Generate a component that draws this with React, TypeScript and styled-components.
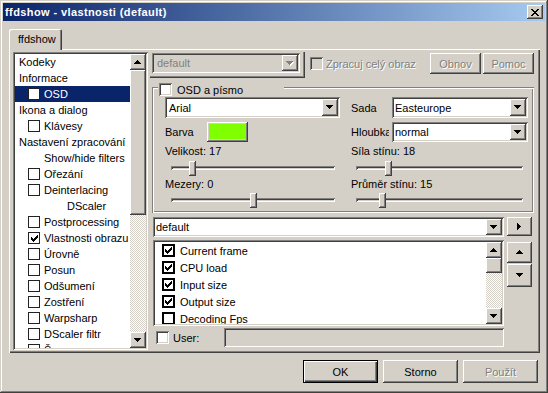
import React from "react";
import styled, { createGlobalStyle, css } from "styled-components";

const FACE = "#d4d0c8";

const raised = css`
  box-shadow: inset -1px -1px #404040, inset 1px 1px #ffffff, inset -2px -2px #808080, inset 2px 2px ${FACE};
`;
const sunken = css`
  box-shadow: inset 1px 1px #808080, inset -1px -1px #ffffff, inset 2px 2px #404040, inset -2px -2px ${FACE};
`;
const etched = css`
  box-shadow: inset 1px 1px #808080, inset 2px 2px #ffffff, inset -1px -1px #ffffff, inset -2px -2px #808080;
`;

const GlobalStyle = createGlobalStyle`
  html, body { margin: 0; padding: 0; background: ${FACE}; }
  body { font-family: "Liberation Sans", Arial, sans-serif; font-size: 11px; color: #000; }
  * { box-sizing: border-box; }
`;

const PATHS = {
  down: "M0 0h7v1H0zM1 1h5v1H1zM2 2h3v1H2zM3 3h1v1H3z",
  up: "M3 0h1v1H3zM2 1h3v1H2zM1 2h5v1H1zM0 3h7v1H0z",
  right: "M0 0h1v7H0zM1 1h1v5H1zM2 2h1v3H2zM3 3h1v1H3z",
};

const Arrow: React.FC<{ dir: "down" | "up" | "right"; disabled?: boolean }> = ({ dir, disabled }) => {
  const w = dir === "right" ? 5 : 8;
  const h = dir === "right" ? 8 : 5;
  return (
    <svg width={w} height={h} viewBox={`0 0 ${w} ${h}`} shapeRendering="crispEdges">
      {disabled && <path d={PATHS[dir]} fill="#ffffff" transform="translate(1,1)" />}
      <path d={PATHS[dir]} fill={disabled ? "#808080" : "#000000"} />
    </svg>
  );
};

const CheckMark: React.FC = () => (
  <svg width="7" height="7" viewBox="0 0 7 7" shapeRendering="crispEdges">
    <path d="M0 2h1v3H0zM1 3h1v3H1zM2 4h1v3H2zM3 3h1v3H3zM4 2h1v3H4zM5 1h1v3H5zM6 0h1v3H6z" fill="#000" />
  </svg>
);

const CloseGlyph: React.FC = () => (
  <svg width="8" height="7" viewBox="0 0 8 7" shapeRendering="crispEdges">
    <path
      d="M0 0h2v1H0zM6 0h2v1H6zM1 1h2v1H1zM5 1h2v1H5zM2 2h4v1H2zM3 3h2v1H3zM2 4h4v1H2zM1 5h2v1H1zM5 5h2v1H5zM0 6h2v1H0zM6 6h2v1H6z"
      fill="#000"
    />
  </svg>
);

/* ---------- window chrome ---------- */

const Window = styled.div`
  width: 548px;
  height: 393px;
  padding: 3px;
  background: ${FACE};
  display: flex;
  flex-direction: column;
  box-shadow: inset -1px -1px #404040, inset 1px 1px ${FACE}, inset -2px -2px #808080, inset 2px 2px #ffffff;
`;

const TitleBar = styled.div`
  height: 18px;
  flex: none;
  display: flex;
  align-items: center;
  justify-content: space-between;
  padding: 0 2px;
  background: linear-gradient(to right, #0a246a, #a6caf0);
`;

const TitleText = styled.span`
  color: #ffffff;
  font-weight: bold;
  font-size: 11px;
  letter-spacing: 0.4px;
  line-height: 18px;
`;

const CloseButton = styled.div`
  width: 16px;
  height: 14px;
  background: ${FACE};
  display: flex;
  align-items: center;
  justify-content: center;
  ${raised}
`;

const Body = styled.div`
  display: flex;
  flex-direction: column;
  padding: 8px 5px 0 6px;
`;

const TabStrip = styled.div`
  height: 20px;
  display: flex;
  position: relative;
  z-index: 1;
`;

const Tab = styled.div`
  width: 53px;
  height: 21px;
  padding-left: 9px;
  line-height: 20px;
  background: ${FACE};
  border-radius: 2px 2px 0 0;
  box-shadow: inset 1px 1px #ffffff, inset -1px 0 #404040, inset -2px 0 #808080;
`;

const Panel = styled.div`
  width: 531px;
  height: 304px;
  padding: 3px 6px 0 4px;
  display: grid;
  grid-template-columns: 135px 1fr;
  column-gap: 2px;
  align-items: start;
  box-shadow: inset 1px 1px #ffffff, inset -1px -1px #404040, inset -2px -2px #808080;
`;

/* ---------- tree ---------- */

const TreeBox = styled.div`
  height: 298px;
  padding: 2px;
  background: #ffffff;
  display: flex;
  ${sunken}
`;

const ItemsArea = styled.div`
  flex: 1;
  overflow: hidden;
`;

const TreeRow = styled.div<{ $indent: number; $selected?: boolean }>`
  height: 16px;
  display: flex;
  align-items: center;
  gap: 4px;
  padding-left: ${(p) => p.$indent}px;
  white-space: nowrap;
  background: ${(p) => (p.$selected ? "#0a246a" : "transparent")};
  color: ${(p) => (p.$selected ? "#ffffff" : "#000000")};
`;

const TreeCheck = styled.div`
  width: 12px;
  height: 12px;
  flex: none;
  border: 1px solid #222222;
  background: #ffffff;
  display: flex;
  align-items: center;
  justify-content: center;
`;

const ScrollBar = styled.div`
  width: 16px;
  flex: none;
  display: flex;
  flex-direction: column;
`;

const ScrollButton = styled.div`
  height: 16px;
  flex: none;
  background: ${FACE};
  display: flex;
  align-items: center;
  justify-content: center;
  ${raised}
`;

const ScrollThumb = styled.div<{ $h: number }>`
  height: ${(p) => p.$h}px;
  flex: none;
  background: ${FACE};
  ${raised}
`;

const ScrollTrack = styled.div`
  flex: 1;
  background: repeating-conic-gradient(${FACE} 0 25%, #ffffff 0 50%) 0 0 / 2px 2px;
`;

/* ---------- right pane ---------- */

const RightPane = styled.div`
  display: flex;
  flex-direction: column;
`;

const TopRow = styled.div`
  height: 26px;
  display: flex;
  align-items: flex-start;
`;

const ProfileFrame = styled.div`
  width: 155px;
  height: 26px;
  flex: none;
  padding: 1px 0 0 2px;
  box-shadow: inset -1px -1px #404040, inset -2px -2px #808080;
`;

const ComboBox = styled.div<{ $w: number; $h: number; $disabled?: boolean }>`
  width: ${(p) => p.$w}px;
  height: ${(p) => p.$h}px;
  flex: none;
  padding: 2px;
  display: flex;
  background: ${(p) => (p.$disabled ? FACE : "#ffffff")};
  ${sunken}
`;

const ComboValue = styled.div<{ $pad: number; $disabled?: boolean }>`
  flex: 1;
  display: flex;
  align-items: center;
  padding-left: ${(p) => p.$pad}px;
  color: ${(p) => (p.$disabled ? "#808080" : "#000000")};
  white-space: nowrap;
  overflow: hidden;
`;

const DropButton = styled.div`
  width: 16px;
  flex: none;
  background: ${FACE};
  display: flex;
  align-items: center;
  justify-content: center;
  ${raised}
`;

const Check3D = styled.div<{ $bg: string }>`
  width: 13px;
  height: 13px;
  flex: none;
  background: ${(p) => p.$bg};
  ${sunken}
`;

const DisabledCheckLabel = styled.label`
  display: flex;
  align-items: center;
  gap: 3px;
  margin: 5px 0 0 5px;
  color: #808080;
  text-shadow: 1px 1px #ffffff;
  white-space: nowrap;
`;

const ButtonGroup = styled.div<{ $gap: number }>`
  display: flex;
  gap: ${(p) => p.$gap}px;
  margin-left: auto;
`;

const PushButton = styled.button<{ $w: number; $h: number; $default?: boolean; $top?: number }>`
  width: ${(p) => p.$w}px;
  height: ${(p) => p.$h}px;
  margin-top: ${(p) => p.$top ?? 0}px;
  padding: 0;
  border: none;
  background: ${FACE};
  font: inherit;
  font-size: 11px;
  color: #000000;
  ${(p) =>
    p.$default
      ? css`
          box-shadow: inset 0 0 0 1px #000000, inset 2px 2px #ffffff, inset -2px -2px #404040, inset -3px -3px #808080;
        `
      : raised}
  &:disabled {
    color: #808080;
    text-shadow: 1px 1px #ffffff;
  }
`;

/* ---------- OSD group ---------- */

const GroupBox = styled.div`
  position: relative;
  width: 382px;
  height: 126px;
  margin: 9px 0 0 2px;
  padding: 10px 0 0 13px;
  display: grid;
  grid-template-columns: 175px 177px;
  grid-template-rows: 25px 22px 15px 18px 14px 18px;
  column-gap: 11px;
  align-items: start;
  ${etched}
`;

const GroupLegend = styled.div`
  position: absolute;
  left: 6px;
  top: -4px;
  width: 126px;
  height: 13px;
  padding-left: 1px;
  display: flex;
  align-items: center;
  gap: 5px;
  background: ${FACE};
`;

const FieldRow = styled.div`
  display: flex;
  align-items: center;
`;

const FieldLabel = styled.span<{ $w: number }>`
  width: ${(p) => p.$w}px;
  flex: none;
  overflow: hidden;
  white-space: nowrap;
`;

const Swatch = styled.div<{ $color: string }>`
  width: 41px;
  height: 20px;
  padding: 2px 2px 3px 2px;
  background: ${FACE};
  ${raised}
  &::after {
    content: "";
    display: block;
    height: 100%;
    background: ${(p) => p.$color};
  }
`;

const ValueLabel = styled.div`
  height: 15px;
  line-height: 15px;
  white-space: nowrap;
`;

const SliderBox = styled.div<{ $l: number; $r: number }>`
  height: 18px;
  padding: 7px ${(p) => p.$r}px 0 ${(p) => p.$l}px;
`;

const SliderTrack = styled.div`
  position: relative;
  height: 4px;
  ${sunken}
`;

const SliderThumb = styled.div`
  position: absolute;
  top: -5px;
  width: 7px;
  height: 15px;
  background: ${FACE};
  ${raised}
`;

const Slider: React.FC<{ pct: number; l: number; r: number }> = ({ pct, l, r }) => (
  <SliderBox $l={l} $r={r}>
    <SliderTrack>
      <SliderThumb style={{ left: `calc((100% - 7px) * ${pct})` }} />
    </SliderTrack>
  </SliderBox>
);

/* ---------- lower section ---------- */

const ComboRow = styled.div`
  display: flex;
  align-items: flex-start;
  gap: 3px;
  margin: 4px 0 0 3px;
`;

const SmallButton = styled.div<{ $h: number }>`
  width: 25px;
  height: ${(p) => p.$h}px;
  background: ${FACE};
  display: flex;
  align-items: center;
  justify-content: center;
  ${raised}
`;

const ListRow = styled.div`
  display: flex;
  gap: 3px;
  margin: 3px 0 0 3px;
`;

const ListBox = styled.div`
  width: 351px;
  height: 86px;
  padding: 2px;
  background: #ffffff;
  display: flex;
  ${sunken}
`;

const ListItem = styled.div`
  height: 17px;
  display: flex;
  align-items: center;
  gap: 5px;
  padding-left: 7px;
  white-space: nowrap;
`;

const ListCheck = styled.div`
  width: 13px;
  height: 13px;
  flex: none;
  border: 2px solid #000000;
  background: #ffffff;
  display: flex;
  align-items: center;
  justify-content: center;
`;

const SideButtons = styled.div`
  display: flex;
  flex-direction: column;
  gap: 1px;
  padding-top: 2px;
`;

const UserRow = styled.div`
  width: 351px;
  height: 19px;
  margin: 2px 0 0 3px;
  padding-left: 3px;
  display: flex;
  align-items: center;
  gap: 4px;
`;

const EditBox = styled.div`
  width: 280px;
  height: 19px;
  margin-left: auto;
  background: ${FACE};
  ${sunken}
`;

const ButtonRow = styled.div`
  display: flex;
  justify-content: flex-end;
  gap: 5px;
  margin-top: 7px;
  padding-right: 2px;
`;

/* ---------- data ---------- */

type TreeItem = { label: string; indent: number; check?: boolean; checked?: boolean; selected?: boolean };

const treeItems: TreeItem[] = [
  { label: "Kodeky", indent: 4 },
  { label: "Informace", indent: 4 },
  { label: "OSD", indent: 13, check: true, selected: true },
  { label: "Ikona a dialog", indent: 4 },
  { label: "Klávesy", indent: 13, check: true },
  { label: "Nastavení zpracování", indent: 4 },
  { label: "Show/hide filters", indent: 29 },
  { label: "Ořezání", indent: 13, check: true },
  { label: "Deinterlacing", indent: 13, check: true },
  { label: "DScaler", indent: 52 },
  { label: "Postprocessing", indent: 13, check: true },
  { label: "Vlastnosti obrazu", indent: 13, check: true, checked: true },
  { label: "Úrovně", indent: 13, check: true },
  { label: "Posun", indent: 13, check: true },
  { label: "Odšumení", indent: 13, check: true },
  { label: "Zostření", indent: 13, check: true },
  { label: "Warpsharp", indent: 13, check: true },
  { label: "DScaler filtr", indent: 13, check: true },
  { label: "Šum", indent: 13, check: true },
];

const osdItems = [
  { label: "Current frame", checked: true },
  { label: "CPU load", checked: true },
  { label: "Input size", checked: true },
  { label: "Output size", checked: true },
  { label: "Decoding Fps", checked: false },
];

const Combo: React.FC<{ w: number; h: number; value: string; pad?: number; disabled?: boolean }> = ({
  w,
  h,
  value,
  pad = 1,
  disabled,
}) => (
  <ComboBox $w={w} $h={h} $disabled={disabled}>
    <ComboValue $pad={pad} $disabled={disabled}>
      {value}
    </ComboValue>
    <DropButton>
      <Arrow dir="down" disabled={disabled} />
    </DropButton>
  </ComboBox>
);

export default function App() {
  return (
    <>
      <GlobalStyle />
      <Window>
        <TitleBar>
          <TitleText>ffdshow - vlastnosti (default)</TitleText>
          <CloseButton>
            <CloseGlyph />
          </CloseButton>
        </TitleBar>
        <Body>
          <TabStrip>
            <Tab>ffdshow</Tab>
          </TabStrip>
          <Panel>
            <TreeBox>
              <ItemsArea>
                {treeItems.map((it) => (
                  <TreeRow key={it.label} $indent={it.indent} $selected={it.selected}>
                    {it.check && <TreeCheck>{it.checked && <CheckMark />}</TreeCheck>}
                    <span>{it.label}</span>
                  </TreeRow>
                ))}
              </ItemsArea>
              <ScrollBar>
                <ScrollButton>
                  <Arrow dir="up" />
                </ScrollButton>
                <ScrollThumb $h={145} />
                <ScrollTrack />
                <ScrollButton>
                  <Arrow dir="down" />
                </ScrollButton>
              </ScrollBar>
            </TreeBox>

            <RightPane>
              <TopRow>
                <ProfileFrame>
                  <Combo w={148} h={20} value="default" pad={3} disabled />
                </ProfileFrame>
                <DisabledCheckLabel>
                  <Check3D $bg={FACE} />
                  Zpracuj celý obraz
                </DisabledCheckLabel>
                <ButtonGroup $gap={2}>
                  <PushButton $w={51} $h={21} $top={1} disabled>
                    Obnov
                  </PushButton>
                  <PushButton $w={51} $h={21} $top={1} disabled>
                    Pomoc
                  </PushButton>
                </ButtonGroup>
              </TopRow>

              <GroupBox>
                <GroupLegend>
                  <Check3D $bg="#ffffff" />
                  <span>OSD a písmo</span>
                </GroupLegend>

                <Combo w={175} h={21} value="Arial" pad={2} />
                <FieldRow>
                  <FieldLabel $w={38}>Sada</FieldLabel>
                  <span style={{ width: 3 }} />
                  <Combo w={136} h={21} value="Easteurope" pad={1} />
                </FieldRow>

                <FieldRow>
                  <FieldLabel $w={42}>Barva</FieldLabel>
                  <Swatch $color="#80ff00" />
                </FieldRow>
                <FieldRow>
                  <FieldLabel $w={38}>Hloubka</FieldLabel>
                  <span style={{ width: 3 }} />
                  <Combo w={136} h={20} value="normal" pad={1} />
                </FieldRow>

                <ValueLabel>Velikost: 17</ValueLabel>
                <ValueLabel>Síla stínu: 18</ValueLabel>

                <Slider pct={0.115} l={6} r={5} />
                <Slider pct={0.18} l={5} r={5} />

                <ValueLabel>Mezery: 0</ValueLabel>
                <ValueLabel>Průměr stínu: 15</ValueLabel>

                <Slider pct={0.503} l={6} r={5} />
                <Slider pct={0.144} l={5} r={5} />
              </GroupBox>

              <ComboRow>
                <Combo w={351} h={20} value="default" pad={1} />
                <SmallButton $h={19}>
                  <Arrow dir="right" />
                </SmallButton>
              </ComboRow>

              <ListRow>
                <ListBox>
                  <ItemsArea>
                    {osdItems.map((it) => (
                      <ListItem key={it.label}>
                        <ListCheck>{it.checked && <CheckMark />}</ListCheck>
                        <span>{it.label}</span>
                      </ListItem>
                    ))}
                  </ItemsArea>
                  <ScrollBar>
                    <ScrollButton>
                      <Arrow dir="up" />
                    </ScrollButton>
                    <ScrollThumb $h={15} />
                    <ScrollTrack />
                    <ScrollButton>
                      <Arrow dir="down" />
                    </ScrollButton>
                  </ScrollBar>
                </ListBox>
                <SideButtons>
                  <SmallButton $h={21}>
                    <Arrow dir="up" />
                  </SmallButton>
                  <SmallButton $h={23}>
                    <Arrow dir="down" />
                  </SmallButton>
                </SideButtons>
              </ListRow>

              <UserRow>
                <Check3D $bg="#ffffff" />
                <span>User:</span>
                <EditBox />
              </UserRow>
            </RightPane>
          </Panel>

          <ButtonRow>
            <PushButton $w={75} $h={23} $default>
              OK
            </PushButton>
            <PushButton $w={75} $h={23}>
              Storno
            </PushButton>
            <PushButton $w={75} $h={23} disabled>
              Použít
            </PushButton>
          </ButtonRow>
        </Body>
      </Window>
    </>
  );
}
